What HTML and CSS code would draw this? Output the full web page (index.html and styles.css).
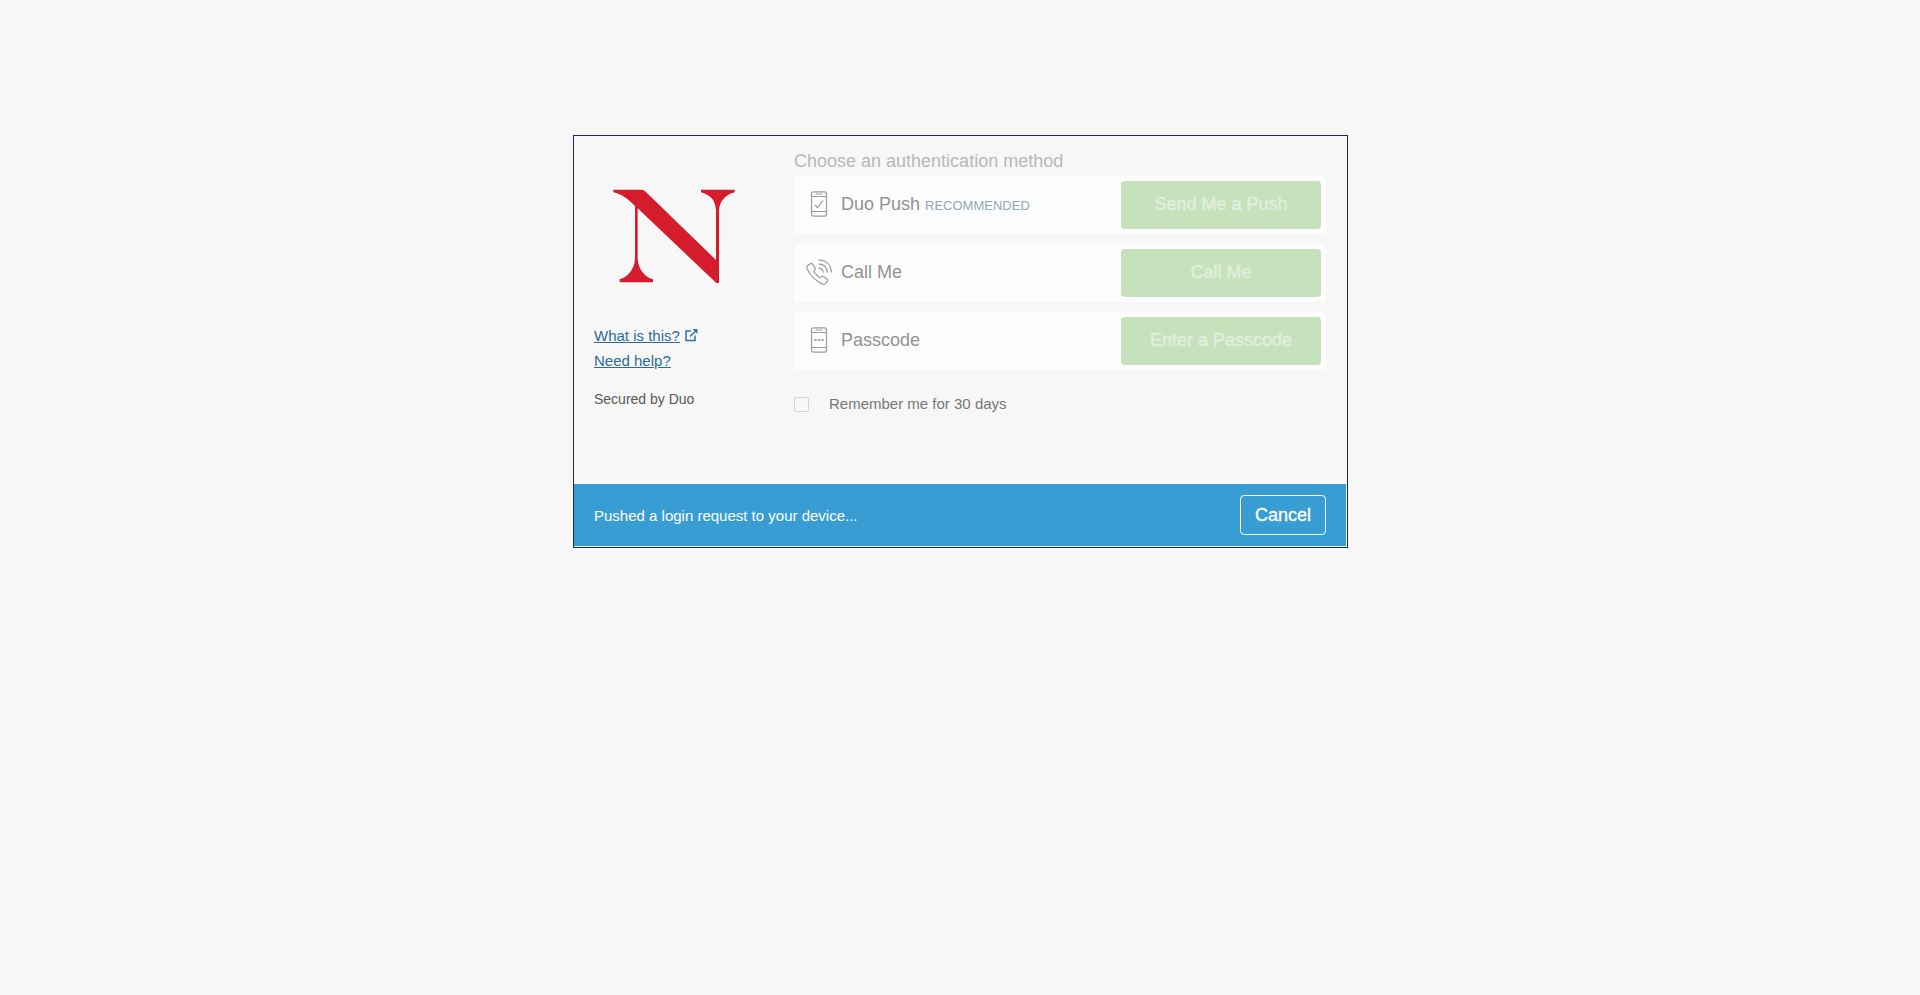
FILE: index.html
```html
<!DOCTYPE html>
<html lang="en">
<head>
<meta charset="utf-8">
<title>Two-factor authentication</title>
<meta name="viewport" content="width=device-width, initial-scale=1">
<link rel="stylesheet" href="styles.css">
</head>
<body>
<main class="prompt">
  <div class="content">
    <aside class="side">
      <svg class="logo" viewBox="24 23 366 285" role="img" aria-label="N logo">
        <path fill="#d41c2c" d="M25 28H110Q116 28 122 34L333 239V90C331 55 312 43 288 36V28H389V36C362 43 344 62 342 90V308H334L98 84V235C100 268 120 290 144 297V306H44V297C68 290 88 268 90 235V77C70 57 50 41 25 36Z"/>
      </svg>
      <nav class="links">
        <a href="#about">What is this?</a>
        <svg class="external" viewBox="0 0 14 14" aria-hidden="true">
          <path d="M7 3H2V12.500H11V7.500M6 8.500L12 2.500" fill="none" stroke="#2a76a2" stroke-width="1.500"/>
          <path d="M8.500 1H13.500V6Z" fill="#2a76a2"/>
        </svg>
        <br>
        <a href="#help">Need help?</a>
      </nav>
      <p class="secured">Secured by Duo</p>
    </aside>
    <form class="methods">
      <h1 class="heading">Choose an authentication method</h1>
      <ul class="list">
        <li class="method">
          <svg class="icon" viewBox="0 0 26 26" aria-hidden="true">
            <rect x="5.500" y="0.800" width="15" height="24.400" rx="2"/>
            <path d="M5.500 5.500H20.500M5.500 20.500H20.500M9.500 3H16.500M9 14L11.500 16.500L17 9.500"/>
          </svg>
          <span class="name">Duo Push <small class="tag">RECOMMENDED</small></span>
          <button class="action" type="button">Send Me a Push</button>
        </li>
        <li class="method">
          <svg class="icon" viewBox="0 0 26 26" aria-hidden="true">
            <path d="M2 6.300L4.300 4.700C5.200 4.200 6.200 4.600 6.700 5.400L9 8.600C9.600 9.500 9.300 10.500 8.500 11.200C7.700 11.900 7.700 12.600 8.300 13.400L12.800 18C13.600 18.700 14.300 18.700 15 17.900C15.700 17.200 16.600 17 17.500 17.600L20.700 19.700C21.600 20.300 21.900 21.300 21.300 22.200L19.800 24.200C18.800 25.300 17.500 25.500 16.200 24.900C9.500 21.800 4.500 16.500 1.200 9.900C0.500 8.500 0.800 7.300 2 6.300Z"/>
            <path d="M12.500 8.800C15.400 9.100 17.100 10.900 17.300 13.700M12.500 4.800C17.900 5.100 21.100 8.300 21.400 13.600M12.500 0.800C20.300 1.100 25.100 5.900 25.400 13.500"/>
          </svg>
          <span class="name">Call Me</span>
          <button class="action" type="button">Call Me</button>
        </li>
        <li class="method">
          <svg class="icon" viewBox="0 0 26 26" aria-hidden="true">
            <rect x="5.500" y="0.800" width="15" height="24.400" rx="2"/>
            <path d="M5.500 5.500H20.500M5.500 20.500H20.500M9.500 3H16.500"/>
            <path stroke-width="2" d="M8.500 13H10.500M12 13H14M15.500 13H17.500"/>
          </svg>
          <span class="name">Passcode</span>
          <button class="action" type="button">Enter a Passcode</button>
        </li>
      </ul>
      <label class="remember" for="remember"><input class="check" id="remember" type="checkbox">Remember me for 30 days</label>
    </form>
  </div>
  <footer class="status">
    <p class="message" role="status">Pushed a login request to your device...</p>
    <button class="cancel" type="button">Cancel</button>
  </footer>
</main>
</body>
</html>
```
FILE: styles.css
```css
* {
  box-sizing: border-box;
}

body {
  margin: 0;
  padding: 135px 20px 20px 21px;
  background: #f7f7f7;
  color: #585858;
  font-family: "Liberation Sans", Arial, sans-serif;
  font-size: 15px;
}

h1, p, ul {
  margin: 0;
  padding: 0;
  font-weight: normal;
}

button {
  font: inherit;
  font-size: 18px;
  border-radius: 4px;
  cursor: pointer;
}

.prompt {
  max-width: 775px;
  margin: 0 auto;
  padding: 0 1px 1px 0;
  border: 1px solid #10304d;
}

.content {
  display: grid;
  grid-template-columns: 200px 1fr;
  min-height: 348px;
  padding: 13px 20px 20px;
}

.side {
  padding-top: 39px;
}

.logo {
  display: block;
  width: 122px;
  height: 95px;
  margin: 0 0 40px 19px;
}

.links {
  line-height: 25px;
}

.links a {
  color: #2a6d9a;
  text-decoration: underline;
}

.external {
  width: 14px;
  height: 14px;
  vertical-align: -1px;
}

.secured {
  margin-top: 16px;
  font-size: 14px;
  line-height: 20px;
}

.heading {
  margin-bottom: 3px;
  color: #b8b8b8;
  font-size: 18px;
  line-height: 24px;
}

.list {
  display: grid;
  gap: 10px;
  list-style: none;
}

.method {
  display: flex;
  align-items: center;
  gap: 9px;
  padding: 5px 5px 5px 12px;
  border-radius: 4px;
  background: #fdfdfd;
}

.icon {
  width: 26px;
  height: 26px;
  margin-bottom: 2px;
  fill: none;
  stroke: #9c9c9c;
  stroke-width: 1.2px;
}

.name {
  flex: 1;
  padding-bottom: 2px;
  color: #929292;
  font-size: 18px;
}

.tag {
  color: #91a8ba;
  font-size: 13px;
}

.action {
  width: 200px;
  height: 48px;
  padding: 0 0 2px;
  border: 0;
  background: #c6e2bd;
  color: #e0efdc;
  -webkit-text-stroke: 0.5px #e0efdc;
}

.remember {
  display: flex;
  align-items: center;
  gap: 20px;
  margin-top: 24px;
  color: #777;
  line-height: 20px;
}

.check {
  appearance: none;
  width: 15px;
  height: 15px;
  margin: 0;
  border: 1px solid #d4d4d4;
  border-radius: 2px;
  background: #f8f8f8;
}

.check:checked {
  background: #389dd3;
}

.status {
  display: flex;
  align-items: center;
  justify-content: space-between;
  padding: 11px 20px;
  background: #389dd3;
  color: #fff;
}

.cancel {
  height: 40px;
  padding: 0 14px;
  border: 1px solid #fff;
  background: transparent;
  color: #fff;
  -webkit-text-stroke: 0.3px #fff;
}
```
